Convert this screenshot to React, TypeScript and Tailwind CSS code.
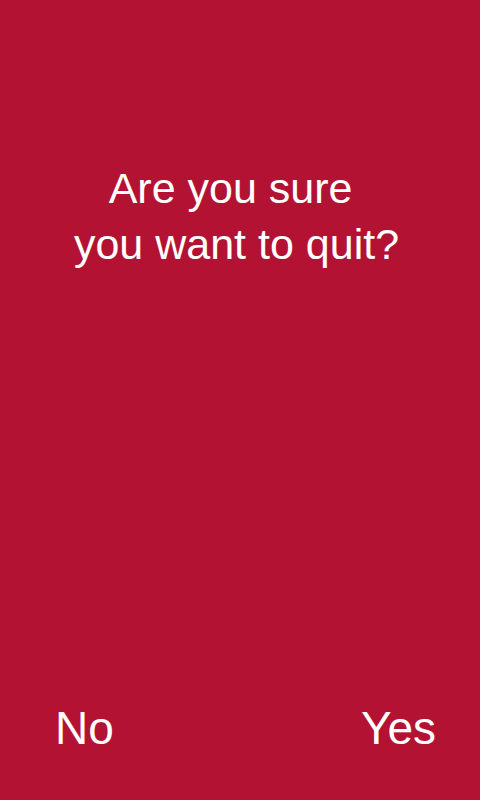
export default function App() {
  return (
    <div
      className="h-[800px] w-full flex flex-col bg-[#b41232] text-white"
      style={{ fontFamily: '"Liberation Sans", Arial, sans-serif' }}
    >
      <h1 className="pt-[160px] pr-[7px] text-center text-[43px] leading-[56px] font-normal whitespace-pre">
        {"Are you sure \nyou want to quit?"}
      </h1>
      <div className="mt-auto flex justify-between pl-[55px] pr-[44px] pb-[48px] text-[46px] leading-[48px]">
        <button className="font-normal">No</button>
        <button className="font-normal">Yes</button>
      </div>
    </div>
  );
}
